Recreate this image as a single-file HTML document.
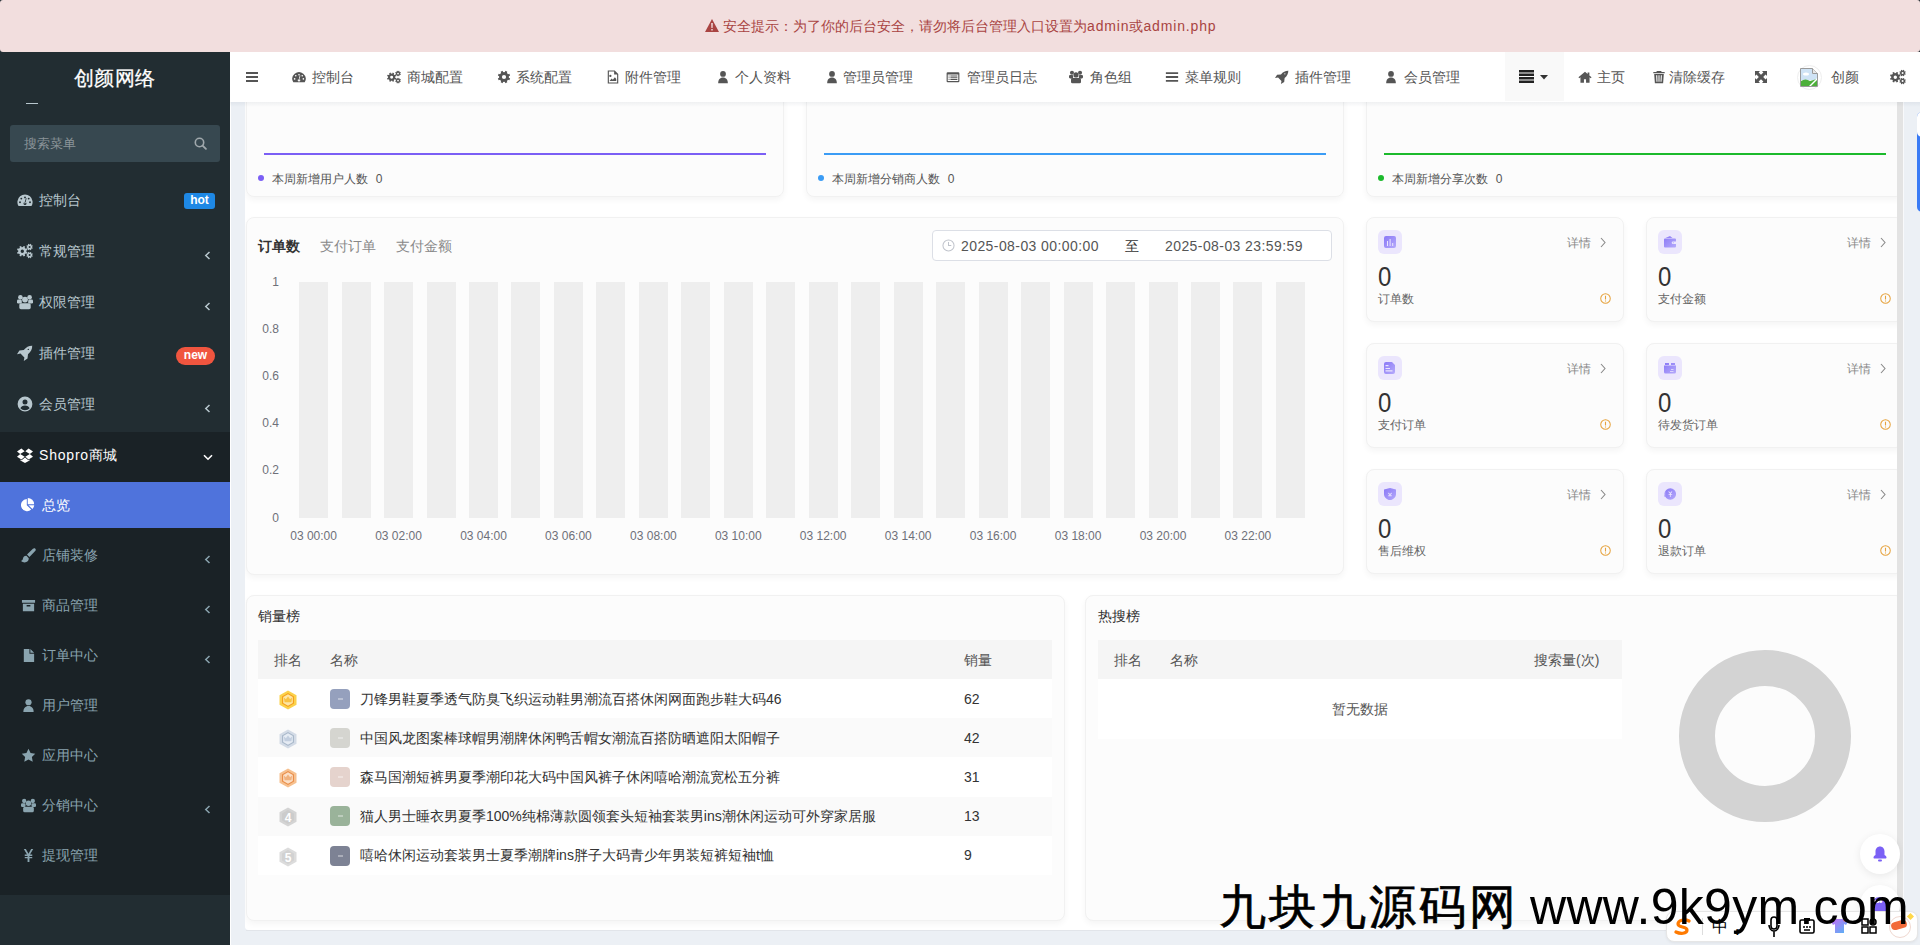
<!DOCTYPE html>
<html><head><meta charset="utf-8">
<style>
*{box-sizing:border-box;margin:0;padding:0}
html,body{width:1920px;height:945px;overflow:hidden;font-family:"Liberation Sans",sans-serif;font-size:14px;color:#333;background:#222d32;position:relative}
.abs{position:absolute}
.t{white-space:nowrap;line-height:1}
#alert{left:0;top:0;width:1920px;height:52px;background:#f2dede;border-radius:3px}
#side{left:0;top:52px;width:230px;height:893px;background:#222d32;overflow:hidden}
#hdr{left:230px;top:52px;width:1690px;height:50px;background:#fff}
#panel{left:245px;top:102px;width:1659px;height:828px;background:#fff;border-radius:0 0 3px 3px;overflow:hidden}
.card{position:absolute;background:#fcfcfc;border-radius:8px;border:1px solid #f1f1f1;box-shadow:0 3px 6px rgba(0,0,0,.045)}
</style></head><body>

<div class="abs" style="left:230px;top:102px;width:1690px;height:843px;background:#ecf0f5"></div>
<div style="position:absolute;left:0;top:0;width:1920px;height:945px;clip-path:inset(102px 16px 15px 245px round 0 0 3px 3px)">
<div id="panel" class="abs"></div>
<div class="card" style="left:246px;top:-20px;width:538px;height:217px;"></div>
<div class="abs" style="left:264px;top:153px;width:502px;height:2px;background:#7b5ff5"></div>
<div class="abs" style="left:258px;top:175px;width:6px;height:6px;border-radius:50%;background:#7b5ff5"></div>
<div class="abs t" style="left:272px;top:173px;font-size:12px;color:#555;">本周新增用户人数&nbsp;&nbsp;<span style="margin-left:1px">0</span></div>
<div class="card" style="left:806px;top:-20px;width:538px;height:217px;"></div>
<div class="abs" style="left:824px;top:153px;width:502px;height:2px;background:#3b9cf5"></div>
<div class="abs" style="left:818px;top:175px;width:6px;height:6px;border-radius:50%;background:#3b9cf5"></div>
<div class="abs t" style="left:832px;top:173px;font-size:12px;color:#555;">本周新增分销商人数&nbsp;&nbsp;<span style="margin-left:1px">0</span></div>
<div class="card" style="left:1366px;top:-20px;width:538px;height:217px;"></div>
<div class="abs" style="left:1384px;top:153px;width:502px;height:2px;background:#1cba2c"></div>
<div class="abs" style="left:1378px;top:175px;width:6px;height:6px;border-radius:50%;background:#1cba2c"></div>
<div class="abs t" style="left:1392px;top:173px;font-size:12px;color:#555;">本周新增分享次数&nbsp;&nbsp;<span style="margin-left:1px">0</span></div>
<div class="card" style="left:246px;top:217px;width:1098px;height:358px;"></div>
<div class="abs t" style="left:258px;top:239px;font-size:14px;color:#333;font-weight:bold">订单数</div>
<div class="abs t" style="left:320px;top:239px;font-size:14px;color:#888;">支付订单</div>
<div class="abs t" style="left:396px;top:239px;font-size:14px;color:#888;">支付金额</div>
<div class="abs" style="left:932px;top:230px;width:400px;height:31px;border:1px solid #dcdfe6;border-radius:4px;background:#fff"></div>
<svg class="abs" style="left:942px;top:239px;width:13px;height:13px" viewBox="0 0 14 14"><circle cx="7" cy="7" r="6" stroke="#c0c4cc" stroke-width="1.1" fill="none"/><path d="M7 3.2V7h3" stroke="#c0c4cc" stroke-width="1.1" fill="none"/></svg>
<div class="abs t" style="left:961px;top:239px;font-size:14px;color:#555;letter-spacing:.42px;transform:scaleY(1.08);transform-origin:0 80%">2025-08-03 00:00:00</div>
<div class="abs t" style="left:1125px;top:239px;font-size:14px;color:#333;">至</div>
<div class="abs t" style="left:1165px;top:239px;font-size:14px;color:#555;letter-spacing:.42px;transform:scaleY(1.08);transform-origin:0 80%">2025-08-03 23:59:59</div>
<div class="abs t" style="left:230px;width:49px;text-align:right;top:276.0px;font-size:12px;color:#6e7079">1</div>
<div class="abs t" style="left:230px;width:49px;text-align:right;top:323.1px;font-size:12px;color:#6e7079">0.8</div>
<div class="abs t" style="left:230px;width:49px;text-align:right;top:370.2px;font-size:12px;color:#6e7079">0.6</div>
<div class="abs t" style="left:230px;width:49px;text-align:right;top:417.3px;font-size:12px;color:#6e7079">0.4</div>
<div class="abs t" style="left:230px;width:49px;text-align:right;top:464.4px;font-size:12px;color:#6e7079">0.2</div>
<div class="abs t" style="left:230px;width:49px;text-align:right;top:511.5px;font-size:12px;color:#6e7079">0</div>
<div class="abs" style="left:299.10px;top:282px;width:29px;height:235.5px;background:#eeeeee"></div>
<div class="abs" style="left:341.57px;top:282px;width:29px;height:235.5px;background:#eeeeee"></div>
<div class="abs" style="left:384.04px;top:282px;width:29px;height:235.5px;background:#eeeeee"></div>
<div class="abs" style="left:426.51px;top:282px;width:29px;height:235.5px;background:#eeeeee"></div>
<div class="abs" style="left:468.98px;top:282px;width:29px;height:235.5px;background:#eeeeee"></div>
<div class="abs" style="left:511.45px;top:282px;width:29px;height:235.5px;background:#eeeeee"></div>
<div class="abs" style="left:553.92px;top:282px;width:29px;height:235.5px;background:#eeeeee"></div>
<div class="abs" style="left:596.39px;top:282px;width:29px;height:235.5px;background:#eeeeee"></div>
<div class="abs" style="left:638.86px;top:282px;width:29px;height:235.5px;background:#eeeeee"></div>
<div class="abs" style="left:681.33px;top:282px;width:29px;height:235.5px;background:#eeeeee"></div>
<div class="abs" style="left:723.80px;top:282px;width:29px;height:235.5px;background:#eeeeee"></div>
<div class="abs" style="left:766.27px;top:282px;width:29px;height:235.5px;background:#eeeeee"></div>
<div class="abs" style="left:808.74px;top:282px;width:29px;height:235.5px;background:#eeeeee"></div>
<div class="abs" style="left:851.21px;top:282px;width:29px;height:235.5px;background:#eeeeee"></div>
<div class="abs" style="left:893.68px;top:282px;width:29px;height:235.5px;background:#eeeeee"></div>
<div class="abs" style="left:936.15px;top:282px;width:29px;height:235.5px;background:#eeeeee"></div>
<div class="abs" style="left:978.62px;top:282px;width:29px;height:235.5px;background:#eeeeee"></div>
<div class="abs" style="left:1021.09px;top:282px;width:29px;height:235.5px;background:#eeeeee"></div>
<div class="abs" style="left:1063.56px;top:282px;width:29px;height:235.5px;background:#eeeeee"></div>
<div class="abs" style="left:1106.03px;top:282px;width:29px;height:235.5px;background:#eeeeee"></div>
<div class="abs" style="left:1148.50px;top:282px;width:29px;height:235.5px;background:#eeeeee"></div>
<div class="abs" style="left:1190.97px;top:282px;width:29px;height:235.5px;background:#eeeeee"></div>
<div class="abs" style="left:1233.44px;top:282px;width:29px;height:235.5px;background:#eeeeee"></div>
<div class="abs" style="left:1275.91px;top:282px;width:29px;height:235.5px;background:#eeeeee"></div>
<div class="abs t" style="left:263.6px;width:100px;text-align:center;top:529.5px;font-size:12px;color:#6e7079">03 00:00</div>
<div class="abs t" style="left:348.5px;width:100px;text-align:center;top:529.5px;font-size:12px;color:#6e7079">03 02:00</div>
<div class="abs t" style="left:433.5px;width:100px;text-align:center;top:529.5px;font-size:12px;color:#6e7079">03 04:00</div>
<div class="abs t" style="left:518.4px;width:100px;text-align:center;top:529.5px;font-size:12px;color:#6e7079">03 06:00</div>
<div class="abs t" style="left:603.4px;width:100px;text-align:center;top:529.5px;font-size:12px;color:#6e7079">03 08:00</div>
<div class="abs t" style="left:688.3px;width:100px;text-align:center;top:529.5px;font-size:12px;color:#6e7079">03 10:00</div>
<div class="abs t" style="left:773.2px;width:100px;text-align:center;top:529.5px;font-size:12px;color:#6e7079">03 12:00</div>
<div class="abs t" style="left:858.2px;width:100px;text-align:center;top:529.5px;font-size:12px;color:#6e7079">03 14:00</div>
<div class="abs t" style="left:943.1px;width:100px;text-align:center;top:529.5px;font-size:12px;color:#6e7079">03 16:00</div>
<div class="abs t" style="left:1028.1px;width:100px;text-align:center;top:529.5px;font-size:12px;color:#6e7079">03 18:00</div>
<div class="abs t" style="left:1113.0px;width:100px;text-align:center;top:529.5px;font-size:12px;color:#6e7079">03 20:00</div>
<div class="abs t" style="left:1197.9px;width:100px;text-align:center;top:529.5px;font-size:12px;color:#6e7079">03 22:00</div>
<div class="card" style="left:1366px;top:217px;width:258px;height:105px;"></div>
<div class="abs" style="left:1378px;top:230px;width:24px;height:24px;border-radius:6px;background:#ebe6fd"></div>
<svg class="abs" style="left:1384px;top:236px;width:12px;height:12px" viewBox="0 0 12 12"><defs><linearGradient id="g1" x1="0" y1="0" x2="1" y2="1"><stop offset="0" stop-color="#8a78f6"/><stop offset="1" stop-color="#b5aafb"/></linearGradient></defs><path fill="url(#g1)" fill-rule="evenodd" d="M2 0h8a2 2 0 0 1 2 2v8a2 2 0 0 1-2 2H2a2 2 0 0 1-2-2V2a2 2 0 0 1 2-2zM3 5v5h1V5zM5.6 3v7h1V3zM8.2 7v3h1V7z"/></svg>
<div class="abs t" style="left:1567px;top:237px;font-size:12px;color:#888;">详情</div>
<svg class="abs" style="left:1600px;top:237px;width:6px;height:11px" viewBox="0 0 6 11"><path d="M1 1l4 4.5L1 10" stroke="#888" stroke-width="1.1" fill="none"/></svg>
<div class="abs t" style="left:1378px;top:262.8px;font-size:24px;color:#333;transform:scaleY(1.13);transform-origin:0 0">0</div>
<div class="abs t" style="left:1378px;top:293px;font-size:12px;color:#666;">订单数</div>
<svg class="abs" style="left:1600px;top:293px;width:11px;height:11px" viewBox="0 0 12 12"><circle cx="6" cy="6" r="5.2" stroke="#e6a23c" stroke-width="1.1" fill="none"/><path d="M6 3v4M6 8.2v1" stroke="#e6a23c" stroke-width="1.2"/></svg>
<div class="card" style="left:1646px;top:217px;width:258px;height:105px;"></div>
<div class="abs" style="left:1658px;top:230px;width:24px;height:24px;border-radius:6px;background:#ebe6fd"></div>
<svg class="abs" style="left:1664px;top:236px;width:12px;height:12px" viewBox="0 0 12 12"><defs><linearGradient id="g2" x1="0" y1="0" x2="1" y2="1"><stop offset="0" stop-color="#8a78f6"/><stop offset="1" stop-color="#b5aafb"/></linearGradient></defs><path fill="url(#g2)" fill-rule="evenodd" d="M6 0 8.5 2H1.5zM1 2.5h10a1 1 0 0 1 1 1v2H9a1.3 1.3 0 0 0 0 2.6h3v2.4a1 1 0 0 1-1 1H1a1 1 0 0 1-1-1v-7a1 1 0 0 1 1-1zM9.3 6.2a.5.5 0 1 0 0 1 .5.5 0 0 0 0-1z"/></svg>
<div class="abs t" style="left:1847px;top:237px;font-size:12px;color:#888;">详情</div>
<svg class="abs" style="left:1880px;top:237px;width:6px;height:11px" viewBox="0 0 6 11"><path d="M1 1l4 4.5L1 10" stroke="#888" stroke-width="1.1" fill="none"/></svg>
<div class="abs t" style="left:1658px;top:262.8px;font-size:24px;color:#333;transform:scaleY(1.13);transform-origin:0 0">0</div>
<div class="abs t" style="left:1658px;top:293px;font-size:12px;color:#666;">支付金额</div>
<svg class="abs" style="left:1880px;top:293px;width:11px;height:11px" viewBox="0 0 12 12"><circle cx="6" cy="6" r="5.2" stroke="#e6a23c" stroke-width="1.1" fill="none"/><path d="M6 3v4M6 8.2v1" stroke="#e6a23c" stroke-width="1.2"/></svg>
<div class="card" style="left:1366px;top:343px;width:258px;height:105px;"></div>
<div class="abs" style="left:1378px;top:356px;width:24px;height:24px;border-radius:6px;background:#ebe6fd"></div>
<svg class="abs" style="left:1384px;top:362px;width:12px;height:12px" viewBox="0 0 12 12"><defs><linearGradient id="g3" x1="0" y1="0" x2="1" y2="1"><stop offset="0" stop-color="#8a78f6"/><stop offset="1" stop-color="#b5aafb"/></linearGradient></defs><path fill="url(#g3)" fill-rule="evenodd" d="M2 0h6l3 3v7a2 2 0 0 1-2 2H2a2 2 0 0 1-2-2V2a2 2 0 0 1 2-2zM1.5 3h3v1.2h-3zM1.5 6h4.5v1h-4.5zM1.5 8.3h7v1.2h-7z"/></svg>
<div class="abs t" style="left:1567px;top:363px;font-size:12px;color:#888;">详情</div>
<svg class="abs" style="left:1600px;top:363px;width:6px;height:11px" viewBox="0 0 6 11"><path d="M1 1l4 4.5L1 10" stroke="#888" stroke-width="1.1" fill="none"/></svg>
<div class="abs t" style="left:1378px;top:388.8px;font-size:24px;color:#333;transform:scaleY(1.13);transform-origin:0 0">0</div>
<div class="abs t" style="left:1378px;top:419px;font-size:12px;color:#666;">支付订单</div>
<svg class="abs" style="left:1600px;top:419px;width:11px;height:11px" viewBox="0 0 12 12"><circle cx="6" cy="6" r="5.2" stroke="#e6a23c" stroke-width="1.1" fill="none"/><path d="M6 3v4M6 8.2v1" stroke="#e6a23c" stroke-width="1.2"/></svg>
<div class="card" style="left:1646px;top:343px;width:258px;height:105px;"></div>
<div class="abs" style="left:1658px;top:356px;width:24px;height:24px;border-radius:6px;background:#ebe6fd"></div>
<svg class="abs" style="left:1664px;top:362px;width:12px;height:12px" viewBox="0 0 12 12"><defs><linearGradient id="g4" x1="0" y1="0" x2="1" y2="1"><stop offset="0" stop-color="#8a78f6"/><stop offset="1" stop-color="#b5aafb"/></linearGradient></defs><path fill="url(#g4)" fill-rule="evenodd" d="M1 1h4v2H1zM7 1h4v2H7zM0 3.5h12V10a1.5 1.5 0 0 1-1.5 1.5h-9A1.5 1.5 0 0 1 0 10zM7 7h2.5v.8H7zM6 9h3.5v.8H6z"/></svg>
<div class="abs t" style="left:1847px;top:363px;font-size:12px;color:#888;">详情</div>
<svg class="abs" style="left:1880px;top:363px;width:6px;height:11px" viewBox="0 0 6 11"><path d="M1 1l4 4.5L1 10" stroke="#888" stroke-width="1.1" fill="none"/></svg>
<div class="abs t" style="left:1658px;top:388.8px;font-size:24px;color:#333;transform:scaleY(1.13);transform-origin:0 0">0</div>
<div class="abs t" style="left:1658px;top:419px;font-size:12px;color:#666;">待发货订单</div>
<svg class="abs" style="left:1880px;top:419px;width:11px;height:11px" viewBox="0 0 12 12"><circle cx="6" cy="6" r="5.2" stroke="#e6a23c" stroke-width="1.1" fill="none"/><path d="M6 3v4M6 8.2v1" stroke="#e6a23c" stroke-width="1.2"/></svg>
<div class="card" style="left:1366px;top:469px;width:258px;height:105px;"></div>
<div class="abs" style="left:1378px;top:482px;width:24px;height:24px;border-radius:6px;background:#ebe6fd"></div>
<svg class="abs" style="left:1384px;top:488px;width:12px;height:12px" viewBox="0 0 12 12"><defs><linearGradient id="g5" x1="0" y1="0" x2="1" y2="1"><stop offset="0" stop-color="#8a78f6"/><stop offset="1" stop-color="#b5aafb"/></linearGradient></defs><path fill="url(#g5)" fill-rule="evenodd" d="M6 0l6 1.5v5C12 9.5 9 11.5 6 12.5 3 11.5 0 9.5 0 6.5v-5zM4.3 4.5l1.7 1.4 1.7-1.4v1.3L6 7.2 4.3 5.8zM4.3 7.3h3.4v.9H4.3z"/></svg>
<div class="abs t" style="left:1567px;top:489px;font-size:12px;color:#888;">详情</div>
<svg class="abs" style="left:1600px;top:489px;width:6px;height:11px" viewBox="0 0 6 11"><path d="M1 1l4 4.5L1 10" stroke="#888" stroke-width="1.1" fill="none"/></svg>
<div class="abs t" style="left:1378px;top:514.8px;font-size:24px;color:#333;transform:scaleY(1.13);transform-origin:0 0">0</div>
<div class="abs t" style="left:1378px;top:545px;font-size:12px;color:#666;">售后维权</div>
<svg class="abs" style="left:1600px;top:545px;width:11px;height:11px" viewBox="0 0 12 12"><circle cx="6" cy="6" r="5.2" stroke="#e6a23c" stroke-width="1.1" fill="none"/><path d="M6 3v4M6 8.2v1" stroke="#e6a23c" stroke-width="1.2"/></svg>
<div class="card" style="left:1646px;top:469px;width:258px;height:105px;"></div>
<div class="abs" style="left:1658px;top:482px;width:24px;height:24px;border-radius:6px;background:#ebe6fd"></div>
<svg class="abs" style="left:1664px;top:488px;width:12px;height:12px" viewBox="0 0 12 12"><defs><linearGradient id="g6" x1="0" y1="0" x2="1" y2="1"><stop offset="0" stop-color="#8a78f6"/><stop offset="1" stop-color="#b5aafb"/></linearGradient></defs><path fill="url(#g6)" fill-rule="evenodd" d="M6.3.2a5.8 5.8 0 1 1 0 11.6 5.8 5.8 0 0 1 0-11.6zM4.9 3.2l1.4 1.5 1.4-1.5.6.5-1.4 1.7v.9h1.3v.8H6.7V9h-.8V7.1H4.6v-.8h1.3v-.9L4.3 3.7z"/><path fill="#a898f8" d="M0 7.8.6 7.2 1 7.6V3h.8v5.1l-.9.9z"/></svg>
<div class="abs t" style="left:1847px;top:489px;font-size:12px;color:#888;">详情</div>
<svg class="abs" style="left:1880px;top:489px;width:6px;height:11px" viewBox="0 0 6 11"><path d="M1 1l4 4.5L1 10" stroke="#888" stroke-width="1.1" fill="none"/></svg>
<div class="abs t" style="left:1658px;top:514.8px;font-size:24px;color:#333;transform:scaleY(1.13);transform-origin:0 0">0</div>
<div class="abs t" style="left:1658px;top:545px;font-size:12px;color:#666;">退款订单</div>
<svg class="abs" style="left:1880px;top:545px;width:11px;height:11px" viewBox="0 0 12 12"><circle cx="6" cy="6" r="5.2" stroke="#e6a23c" stroke-width="1.1" fill="none"/><path d="M6 3v4M6 8.2v1" stroke="#e6a23c" stroke-width="1.2"/></svg>
<div class="card" style="left:246px;top:595px;width:819px;height:326px;"></div>
<div class="abs t" style="left:258px;top:609px;font-size:14px;color:#333;">销量榜</div>
<div class="abs" style="left:258px;top:640px;width:794px;height:39px;background:#f5f5f5"></div>
<div class="abs t" style="left:274px;top:653px;font-size:14px;color:#555;">排名</div>
<div class="abs t" style="left:330px;top:653px;font-size:14px;color:#555;">名称</div>
<div class="abs t" style="left:964px;top:653px;font-size:14px;color:#555;">销量</div>
<div class="abs" style="left:258px;top:679.0px;width:794px;height:39.2px;background:#ffffff"></div>
<svg class="abs" style="left:279px;top:689.8px;width:18px;height:20px" viewBox="0 0 18 20"><path d="M9 .5 17.5 5.2v9.6L9 19.5 .5 14.8V5.2z" fill="#fbd14b"/><path d="M9 3 15 6.5v7L9 17 3 13.5v-7z" fill="#f5a01a"/><path d="M9 4.3 13.8 7.1v5.8L9 15.7 4.2 12.9V7.1z" fill="#fde6a6"/><path d="M5.6 12.2h6.8l.8-4.6-2.1 1.6L9 6.5 6.9 9.2 4.8 7.6z" fill="#f6b92a" opacity=".8"/></svg>
<div class="abs" style="left:330px;top:688.8px;width:20px;height:20px;border-radius:4px;background:#95a0bd"></div>
<div class="abs" style="left:338px;top:697.8px;width:5px;height:2px;background:rgba(255,255,255,.35)"></div>
<div class="abs t" style="left:360px;top:691.6px;font-size:14px;color:#333;">刀锋男鞋夏季透气防臭飞织运动鞋男潮流百搭休闲网面跑步鞋大码46</div>
<div class="abs t" style="left:964px;top:691.6px;font-size:14px;color:#333;">62</div>
<div class="abs" style="left:258px;top:718.2px;width:794px;height:39.2px;background:#fafafa"></div>
<svg class="abs" style="left:279px;top:729.0px;width:18px;height:20px" viewBox="0 0 18 20"><path d="M9 .5 17.5 5.2v9.6L9 19.5 .5 14.8V5.2z" fill="#d3dbe6"/><path d="M9 3 15 6.5v7L9 17 3 13.5v-7z" fill="#a9b8ca"/><path d="M9 4.3 13.8 7.1v5.8L9 15.7 4.2 12.9V7.1z" fill="#e6ecf4"/><path d="M5.6 12.2h6.8l.8-4.6-2.1 1.6L9 6.5 6.9 9.2 4.8 7.6z" fill="#b9c7d9" opacity=".8"/></svg>
<div class="abs" style="left:330px;top:728.0px;width:20px;height:20px;border-radius:4px;background:#d5d5d0"></div>
<div class="abs" style="left:338px;top:737.0px;width:5px;height:2px;background:rgba(255,255,255,.35)"></div>
<div class="abs t" style="left:360px;top:730.8000000000001px;font-size:14px;color:#333;">中国风龙图案棒球帽男潮牌休闲鸭舌帽女潮流百搭防晒遮阳太阳帽子</div>
<div class="abs t" style="left:964px;top:730.8000000000001px;font-size:14px;color:#333;">42</div>
<div class="abs" style="left:258px;top:757.4px;width:794px;height:39.2px;background:#ffffff"></div>
<svg class="abs" style="left:279px;top:768.2px;width:18px;height:20px" viewBox="0 0 18 20"><path d="M9 .5 17.5 5.2v9.6L9 19.5 .5 14.8V5.2z" fill="#f6c08f"/><path d="M9 3 15 6.5v7L9 17 3 13.5v-7z" fill="#e98d48"/><path d="M9 4.3 13.8 7.1v5.8L9 15.7 4.2 12.9V7.1z" fill="#fbe0c8"/><path d="M5.6 12.2h6.8l.8-4.6-2.1 1.6L9 6.5 6.9 9.2 4.8 7.6z" fill="#eda56a" opacity=".8"/></svg>
<div class="abs" style="left:330px;top:767.2px;width:20px;height:20px;border-radius:4px;background:#e5d3cd"></div>
<div class="abs" style="left:338px;top:776.2px;width:5px;height:2px;background:rgba(255,255,255,.35)"></div>
<div class="abs t" style="left:360px;top:770.0px;font-size:14px;color:#333;">森马国潮短裤男夏季潮印花大码中国风裤子休闲嘻哈潮流宽松五分裤</div>
<div class="abs t" style="left:964px;top:770.0px;font-size:14px;color:#333;">31</div>
<div class="abs" style="left:258px;top:796.6px;width:794px;height:39.2px;background:#fafafa"></div>
<svg class="abs" style="left:279px;top:807.4px;width:18px;height:20px" viewBox="0 0 18 20"><path d="M9 .5 17.5 5.2v9.6L9 19.5 .5 14.8V5.2z" fill="#d4d4d4"/><path d="M9 3 15 6.5v7L9 17 3 13.5v-7z" fill="#cccccc"/><text x="9" y="14.6" font-size="12" font-weight="bold" text-anchor="middle" fill="#fff" font-family="Liberation Sans">4</text></svg>
<div class="abs" style="left:330px;top:806.4px;width:20px;height:20px;border-radius:4px;background:#9ab39a"></div>
<div class="abs" style="left:338px;top:815.4px;width:5px;height:2px;background:rgba(255,255,255,.35)"></div>
<div class="abs t" style="left:360px;top:809.2px;font-size:14px;color:#333;">猫人男士睡衣男夏季100%纯棉薄款圆领套头短袖套装男ins潮休闲运动可外穿家居服</div>
<div class="abs t" style="left:964px;top:809.2px;font-size:14px;color:#333;">13</div>
<div class="abs" style="left:258px;top:835.8px;width:794px;height:39.2px;background:#ffffff"></div>
<svg class="abs" style="left:279px;top:846.6px;width:18px;height:20px" viewBox="0 0 18 20"><path d="M9 .5 17.5 5.2v9.6L9 19.5 .5 14.8V5.2z" fill="#dcdcdc"/><path d="M9 3 15 6.5v7L9 17 3 13.5v-7z" fill="#d2d2d2"/><text x="9" y="14.6" font-size="12" font-weight="bold" text-anchor="middle" fill="#fff" font-family="Liberation Sans">5</text></svg>
<div class="abs" style="left:330px;top:845.6px;width:20px;height:20px;border-radius:4px;background:#7d8294"></div>
<div class="abs" style="left:338px;top:854.6px;width:5px;height:2px;background:rgba(255,255,255,.35)"></div>
<div class="abs t" style="left:360px;top:848.4px;font-size:14px;color:#333;">嘻哈休闲运动套装男士夏季潮牌ins胖子大码青少年男装短裤短袖t恤</div>
<div class="abs t" style="left:964px;top:848.4px;font-size:14px;color:#333;">9</div>
<div class="card" style="left:1085px;top:595px;width:819px;height:326px;"></div>
<div class="abs t" style="left:1098px;top:609px;font-size:14px;color:#333;">热搜榜</div>
<div class="abs" style="left:1098px;top:640px;width:524px;height:39px;background:#f5f5f5"></div>
<div class="abs t" style="left:1114px;top:653px;font-size:14px;color:#555;">排名</div>
<div class="abs t" style="left:1170px;top:653px;font-size:14px;color:#555;">名称</div>
<div class="abs t" style="left:1534px;top:653px;font-size:14px;color:#555;">搜索量(次)</div>
<div class="abs" style="left:1098px;top:679px;width:524px;height:60px;background:#fff"></div>
<div class="abs t" style="left:1332px;top:702px;font-size:14px;color:#555;">暂无数据</div>
<div class="abs" style="left:1679px;top:650px;width:172px;height:172px;border-radius:50%;border:36px solid #d3d3d3"></div>
<div class="abs" style="left:1897px;top:102px;width:6px;height:828px;background:#e3e3e3"></div>
<div class="abs" style="left:1860px;top:834px;width:40px;height:40px;border-radius:50%;background:#fff;box-shadow:0 2px 8px rgba(0,0,0,.08)"></div>
<svg class="abs" style="left:1872px;top:845px;width:16px;height:18px" viewBox="0 0 16 18"><path d="M8 1.5c2.8 0 4.5 2.2 4.5 5V10c1 .6 2 1.5 2 2.5 0 .6-.4 1-1 1h-11c-.6 0-1-.4-1-1 0-1 1-1.9 2-2.5V6.5c0-2.8 1.7-5 4.5-5z" fill="#7b61f5"/><rect x="6" y="14.5" width="4" height="2" rx="1" fill="#7b61f5"/></svg>
<div class="abs" style="left:1860px;top:885px;width:40px;height:40px;border-radius:50%;background:#fff;box-shadow:0 2px 8px rgba(0,0,0,.08)"></div>
<div class="abs" style="left:1871px;top:897px;width:18px;height:16px;border-radius:50%;background:#7b61f5"></div>
<div class="abs t" style="left:1873px;top:897px;font-size:10px;color:#fff;font-weight:bold;letter-spacing:-.5px">•••</div>
</div>
<div class="abs" style="left:1917px;top:112px;width:10px;height:100px;border-radius:6px;background:#3a7bf5"></div>
<div class="abs" style="left:1917px;top:112px;width:10px;height:25px;border-radius:6px;background:#fff"></div>
<div class="abs" style="left:1903px;top:102px;width:1px;height:828px;background:#f8f9fb"></div>
<div class="abs" style="left:246px;top:930px;width:1657px;height:1px;background:#e2e5ea"></div>
<div id="alert" class="abs">
<svg class="abs" style="left:705px;top:19px;width:14px;height:13px" viewBox="0 0 14 13"><path d="M7 0 14 13H0z" fill="#a94442"/><path d="M6.2 4h1.6l-.2 5H6.4zM6.3 10h1.4v1.5H6.3z" fill="#f2dede"/></svg>
<div class="abs t" style="left:723px;top:19px;font-size:14px;color:#a94442;">安全提示：为了你的后台安全，请勿将后台管理入口设置为<span style="letter-spacing:.85px">admin</span>或<span style="letter-spacing:.85px">admin.php</span></div>
</div>
<div id="side" class="abs">
<div class="abs t" style="left:74px;top:15.5px;font-size:20px;color:#fff;-webkit-text-stroke:.25px #fff;letter-spacing:.4px">创颜网络</div>
<div class="abs" style="left:26px;top:51px;width:12px;height:1px;background:#b8c7ce"></div>
<div class="abs" style="left:10px;top:73px;width:210px;height:37px;background:#374850;border-radius:3px"></div>
<div class="abs t" style="left:24px;top:85px;font-size:13px;color:#8b9499;">搜索菜单</div>
<svg class="abs" style="left:194px;top:85px;width:13px;height:13px" viewBox="0 0 13 13"><circle cx="5.5" cy="5.5" r="4.2" stroke="#a0a8ac" stroke-width="1.6" fill="none"/><path d="M8.6 8.6l3.3 3.3" stroke="#a0a8ac" stroke-width="1.8" stroke-linecap="round"/></svg>
<svg class="abs" style="left:17px;top:140px;width:16px;height:16px;" viewBox="0 0 16 16" fill="#b8c7ce"><path fill-rule="evenodd" d="M1.5 14.1A7.6 7.6 0 1 1 14.5 14.1zM7.05 5.40a0.95 0.95 0 1 0 1.90 0a0.95 0.95 0 1 0 -1.90 0zM3.35 6.60a0.95 0.95 0 1 0 1.90 0a0.95 0.95 0 1 0 -1.90 0zM10.75 6.60a0.95 0.95 0 1 0 1.90 0a0.95 0.95 0 1 0 -1.90 0zM2.05 10.20a0.95 0.95 0 1 0 1.90 0a0.95 0.95 0 1 0 -1.90 0zM12.05 10.20a0.95 0.95 0 1 0 1.90 0a0.95 0.95 0 1 0 -1.90 0zM6.50 11.60a1.50 1.50 0 1 0 3.00 0a1.50 1.50 0 1 0 -3.00 0zM8.3 11.6 9.6 6.3 8.9 6.2 7.3 11.4z"/></svg>
<div class="abs t" style="left:39px;top:141px;font-size:14px;color:#b8c7ce;">控制台</div>
<div class="abs" style="left:184px;top:141px;width:31px;height:16px;background:#1e88e5;border-radius:3px;color:#fff;font-size:12px;font-weight:bold;text-align:center;line-height:15px">hot</div>
<svg class="abs" style="left:17px;top:191px;width:16px;height:16px;" viewBox="0 0 16 16" fill="#b8c7ce"><path fill-rule="evenodd" d="M9.40 8.20 L9.34 8.87 L10.56 9.42 L9.88 11.06 L8.64 10.58 L8.20 11.10 L7.68 11.54 L8.16 12.78 L6.52 13.46 L5.97 12.24 L5.30 12.30 L4.63 12.24 L4.08 13.46 L2.44 12.78 L2.92 11.54 L2.40 11.10 L1.96 10.58 L0.72 11.06 L0.04 9.42 L1.26 8.87 L1.20 8.20 L1.26 7.53 L0.04 6.98 L0.72 5.34 L1.96 5.82 L2.40 5.30 L2.92 4.86 L2.44 3.62 L4.08 2.94 L4.63 4.16 L5.30 4.10 L5.97 4.16 L6.52 2.94 L8.16 3.62 L7.68 4.86 L8.20 5.30 L8.64 5.82 L9.88 5.34 L10.56 6.98 L9.34 7.53zM3.60 8.20a1.70 1.70 0 1 0 3.40 0a1.70 1.70 0 1 0 -3.40 0zM15.10 4.00 L15.07 4.41 L15.81 4.75 L15.40 5.75 L14.63 5.45 L14.37 5.77 L14.05 6.03 L14.35 6.80 L13.35 7.21 L13.01 6.47 L12.60 6.50 L12.19 6.47 L11.85 7.21 L10.85 6.80 L11.15 6.03 L10.83 5.77 L10.57 5.45 L9.80 5.75 L9.39 4.75 L10.13 4.41 L10.10 4.00 L10.13 3.59 L9.39 3.25 L9.80 2.25 L10.57 2.55 L10.83 2.23 L11.15 1.97 L10.85 1.20 L11.85 0.79 L12.19 1.53 L12.60 1.50 L13.01 1.53 L13.35 0.79 L14.35 1.20 L14.05 1.97 L14.37 2.23 L14.63 2.55 L15.40 2.25 L15.81 3.25 L15.07 3.59zM11.60 4.00a1.00 1.00 0 1 0 2.00 0a1.00 1.00 0 1 0 -2.00 0zM15.10 12.10 L15.07 12.51 L15.81 12.85 L15.40 13.85 L14.63 13.55 L14.37 13.87 L14.05 14.13 L14.35 14.90 L13.35 15.31 L13.01 14.57 L12.60 14.60 L12.19 14.57 L11.85 15.31 L10.85 14.90 L11.15 14.13 L10.83 13.87 L10.57 13.55 L9.80 13.85 L9.39 12.85 L10.13 12.51 L10.10 12.10 L10.13 11.69 L9.39 11.35 L9.80 10.35 L10.57 10.65 L10.83 10.33 L11.15 10.07 L10.85 9.30 L11.85 8.89 L12.19 9.63 L12.60 9.60 L13.01 9.63 L13.35 8.89 L14.35 9.30 L14.05 10.07 L14.37 10.33 L14.63 10.65 L15.40 10.35 L15.81 11.35 L15.07 11.69zM11.60 12.10a1.00 1.00 0 1 0 2.00 0a1.00 1.00 0 1 0 -2.00 0z"/></svg>
<div class="abs t" style="left:39px;top:192px;font-size:14px;color:#b8c7ce;">常规管理</div>
<svg class="abs" style="left:204px;top:199px;width:7px;height:9px" viewBox="0 0 7 9"><path d="M5.5 1 1.8 4.5 5.5 8" stroke="#b8c7ce" stroke-width="1.5" fill="none"/></svg>
<svg class="abs" style="left:17px;top:242px;width:16px;height:16px;" viewBox="0 0 16 16" fill="#b8c7ce"><circle cx="3.4" cy="3.2" r="2.3"/><circle cx="12.6" cy="3.2" r="2.3"/><circle cx="8" cy="5.6" r="2.9"/><rect x="0" y="5.6" width="4.8" height="4" rx="1.3"/><rect x="11.2" y="5.6" width="4.8" height="4" rx="1.3"/><rect x="2.3" y="9.2" width="11.4" height="6" rx="1.6"/></svg>
<div class="abs t" style="left:39px;top:243px;font-size:14px;color:#b8c7ce;">权限管理</div>
<svg class="abs" style="left:204px;top:250px;width:7px;height:9px" viewBox="0 0 7 9"><path d="M5.5 1 1.8 4.5 5.5 8" stroke="#b8c7ce" stroke-width="1.5" fill="none"/></svg>
<svg class="abs" style="left:17px;top:293px;width:16px;height:16px;" viewBox="0 0 16 16" fill="#b8c7ce"><path fill-rule="evenodd" d="M15.5.8c-3.3-.2-6.3 1.3-8.7 4.2L2.4 5.5 0 9.2l3.5-.6 3.9 3.9-.6 3.5 3.7-2.4.5-4.4c2.9-2.4 4.4-5.4 4.2-8.7zM10.60 4.40a0.70 0.70 0 1 0 1.40 0a0.70 0.70 0 1 0 -1.40 0z"/></svg>
<div class="abs t" style="left:39px;top:294px;font-size:14px;color:#b8c7ce;">插件管理</div>
<div class="abs" style="left:176px;top:295px;width:39px;height:18px;background:#f0553f;border-radius:9px;color:#fff;font-size:12px;font-weight:bold;text-align:center;line-height:17px">new</div>
<svg class="abs" style="left:17px;top:344px;width:16px;height:16px;" viewBox="0 0 16 16" fill="#b8c7ce"><path fill-rule="evenodd" d="M0.60 8.00a7.40 7.40 0 1 0 14.80 0a7.40 7.40 0 1 0 -14.80 0zM5.50 6.00a2.50 2.50 0 1 0 5.00 0a2.50 2.50 0 1 0 -5.00 0zM3.4 12.3C3.9 10.5 5.7 9.4 8 9.4s4.1 1.1 4.6 2.9C11.4 13.6 9.8 14.3 8 14.3s-3.4-.7-4.6-2z"/></svg>
<div class="abs t" style="left:39px;top:345px;font-size:14px;color:#b8c7ce;">会员管理</div>
<svg class="abs" style="left:204px;top:352px;width:7px;height:9px" viewBox="0 0 7 9"><path d="M5.5 1 1.8 4.5 5.5 8" stroke="#b8c7ce" stroke-width="1.5" fill="none"/></svg>
<div class="abs" style="left:0;top:380px;width:230px;height:463px;background:#1a2226"></div>
<svg class="abs" style="left:17px;top:395px;width:16px;height:16px;" viewBox="0 0 16 16" fill="#fff"><path d="M4.4 1.5 0 4.5l3.2 2.6L7.7 4.3zM11.6 1.5 8.3 4.3l4.5 2.8L16 4.5zM3.2 7.1 0 9.7l4.4 2.9 3.3-2.8zM12.8 7.1l-4.5 2.7 3.3 2.8L16 9.7zM8 10.4 4.6 13.2l-1.2-.8v1l4.6 2.6 4.6-2.6v-1l-1.2.8z"/></svg>
<div class="abs t" style="left:39px;top:396px;font-size:14px;color:#fff;"><span style="letter-spacing:.8px">Shopro</span>商城</div>
<svg class="abs" style="left:203px;top:402px;width:10px;height:7px" viewBox="0 0 10 7"><path d="M1 1.2 5 5.2 9 1.2" stroke="#fff" stroke-width="1.6" fill="none"/></svg>
<div class="abs" style="left:0;top:430px;width:230px;height:46px;background:#4f73dc"></div>
<svg class="abs" style="left:21px;top:445px;width:15px;height:15px;" viewBox="0 0 16 16" fill="#fff"><path d="M6.2 2.1A6.5 6.5 0 1 0 10.9 13.4L6.2 8.7z"/><path d="M7.2 1v6.8H14A6.8 6.8 0 0 0 7.2 1z"/><path d="M8 8.8h6.1a6.5 6.5 0 0 1-1.9 4.1z"/></svg>
<div class="abs t" style="left:42px;top:446px;font-size:14px;color:#fff;">总览</div>
<svg class="abs" style="left:20.5px;top:495.5px;width:15px;height:15px;" viewBox="0 0 16 16" fill="#8aa4af"><path d="M15.3.7c-.7-.7-1.8-.6-2.6.2L6.4 7l2.6 2.6 6.1-6.3c.8-.8.9-1.9.2-2.6zM5.8 8.2C3.9 8 2.3 9.4 2.1 11.3 2 12.6 1.3 13.4 0 13.9c1 1 2.5 1.5 3.9 1.5 2.6 0 4.5-1.9 4.4-4.4z"/></svg>
<div class="abs t" style="left:42px;top:496px;font-size:14px;color:#8aa4af;">店铺装修</div>
<svg class="abs" style="left:204px;top:503px;width:7px;height:9px" viewBox="0 0 7 9"><path d="M5.5 1 1.8 4.5 5.5 8" stroke="#8aa4af" stroke-width="1.5" fill="none"/></svg>
<svg class="abs" style="left:20.5px;top:545.5px;width:15px;height:15px;" viewBox="0 0 16 16" fill="#8aa4af"><path d="M1 2h14v3H1zM2 6h12v8H2zm4 1.5v1.5h4V7.5z" fill-rule="evenodd"/></svg>
<div class="abs t" style="left:42px;top:546px;font-size:14px;color:#8aa4af;">商品管理</div>
<svg class="abs" style="left:204px;top:553px;width:7px;height:9px" viewBox="0 0 7 9"><path d="M5.5 1 1.8 4.5 5.5 8" stroke="#8aa4af" stroke-width="1.5" fill="none"/></svg>
<svg class="abs" style="left:20.5px;top:595.5px;width:15px;height:15px;" viewBox="0 0 16 16" fill="#8aa4af"><path d="M3 1h6v5h5v9H3zM10 1l4 4h-4z"/></svg>
<div class="abs t" style="left:42px;top:596px;font-size:14px;color:#8aa4af;">订单中心</div>
<svg class="abs" style="left:204px;top:603px;width:7px;height:9px" viewBox="0 0 7 9"><path d="M5.5 1 1.8 4.5 5.5 8" stroke="#8aa4af" stroke-width="1.5" fill="none"/></svg>
<svg class="abs" style="left:20.5px;top:645.5px;width:15px;height:15px;" viewBox="0 0 16 16" fill="#8aa4af"><circle cx="8" cy="4.5" r="3.3"/><path d="M2.5 15c0-4 2-6.5 5.5-6.5s5.5 2.5 5.5 6.5z"/></svg>
<div class="abs t" style="left:42px;top:646px;font-size:14px;color:#8aa4af;">用户管理</div>
<svg class="abs" style="left:20.5px;top:695.5px;width:15px;height:15px;" viewBox="0 0 16 16" fill="#8aa4af"><path d="M8 .8l2.2 4.6 5 .7-3.6 3.5.9 5L8 12.2l-4.5 2.4.9-5L.8 6.1l5-.7z"/></svg>
<div class="abs t" style="left:42px;top:696px;font-size:14px;color:#8aa4af;">应用中心</div>
<svg class="abs" style="left:20.5px;top:745.5px;width:15px;height:15px;" viewBox="0 0 16 16" fill="#8aa4af"><circle cx="3.4" cy="3.2" r="2.3"/><circle cx="12.6" cy="3.2" r="2.3"/><circle cx="8" cy="5.6" r="2.9"/><rect x="0" y="5.6" width="4.8" height="4" rx="1.3"/><rect x="11.2" y="5.6" width="4.8" height="4" rx="1.3"/><rect x="2.3" y="9.2" width="11.4" height="6" rx="1.6"/></svg>
<div class="abs t" style="left:42px;top:746px;font-size:14px;color:#8aa4af;">分销中心</div>
<svg class="abs" style="left:204px;top:753px;width:7px;height:9px" viewBox="0 0 7 9"><path d="M5.5 1 1.8 4.5 5.5 8" stroke="#8aa4af" stroke-width="1.5" fill="none"/></svg>
<svg class="abs" style="left:20.5px;top:795.5px;width:15px;height:15px;" viewBox="0 0 16 16" fill="#8aa4af"><path d="M3 1h2.2L8 6.2 10.8 1H13L9.6 7H12v1.4H9v1.2h3V11H9v4H7v-4H4V9.6h3V8.4H4V7h2.4z"/></svg>
<div class="abs t" style="left:42px;top:796px;font-size:14px;color:#8aa4af;">提现管理</div>
</div>
<div class="abs" style="left:230px;top:102px;width:1px;height:843px;background:#fff"></div>
<div id="hdr" class="abs">
<svg class="abs" style="left:16px;top:20px;width:12px;height:10px" viewBox="0 0 12 10"><path d="M0 0h12v2H0zM0 4h12v2H0zM0 8h12v2H0z" fill="#555"/></svg>
<svg class="abs" style="left:62px;top:18px;width:14px;height:14px;" viewBox="0 0 16 16" fill="#555"><path fill-rule="evenodd" d="M1.5 14.1A7.6 7.6 0 1 1 14.5 14.1zM7.05 5.40a0.95 0.95 0 1 0 1.90 0a0.95 0.95 0 1 0 -1.90 0zM3.35 6.60a0.95 0.95 0 1 0 1.90 0a0.95 0.95 0 1 0 -1.90 0zM10.75 6.60a0.95 0.95 0 1 0 1.90 0a0.95 0.95 0 1 0 -1.90 0zM2.05 10.20a0.95 0.95 0 1 0 1.90 0a0.95 0.95 0 1 0 -1.90 0zM12.05 10.20a0.95 0.95 0 1 0 1.90 0a0.95 0.95 0 1 0 -1.90 0zM6.50 11.60a1.50 1.50 0 1 0 3.00 0a1.50 1.50 0 1 0 -3.00 0zM8.3 11.6 9.6 6.3 8.9 6.2 7.3 11.4z"/></svg>
<div class="abs t" style="left:82px;top:18px;font-size:14px;color:#555;">控制台</div>
<svg class="abs" style="left:157px;top:18px;width:14px;height:14px;" viewBox="0 0 16 16" fill="#555"><path fill-rule="evenodd" d="M9.40 8.20 L9.34 8.87 L10.56 9.42 L9.88 11.06 L8.64 10.58 L8.20 11.10 L7.68 11.54 L8.16 12.78 L6.52 13.46 L5.97 12.24 L5.30 12.30 L4.63 12.24 L4.08 13.46 L2.44 12.78 L2.92 11.54 L2.40 11.10 L1.96 10.58 L0.72 11.06 L0.04 9.42 L1.26 8.87 L1.20 8.20 L1.26 7.53 L0.04 6.98 L0.72 5.34 L1.96 5.82 L2.40 5.30 L2.92 4.86 L2.44 3.62 L4.08 2.94 L4.63 4.16 L5.30 4.10 L5.97 4.16 L6.52 2.94 L8.16 3.62 L7.68 4.86 L8.20 5.30 L8.64 5.82 L9.88 5.34 L10.56 6.98 L9.34 7.53zM3.60 8.20a1.70 1.70 0 1 0 3.40 0a1.70 1.70 0 1 0 -3.40 0zM15.10 4.00 L15.07 4.41 L15.81 4.75 L15.40 5.75 L14.63 5.45 L14.37 5.77 L14.05 6.03 L14.35 6.80 L13.35 7.21 L13.01 6.47 L12.60 6.50 L12.19 6.47 L11.85 7.21 L10.85 6.80 L11.15 6.03 L10.83 5.77 L10.57 5.45 L9.80 5.75 L9.39 4.75 L10.13 4.41 L10.10 4.00 L10.13 3.59 L9.39 3.25 L9.80 2.25 L10.57 2.55 L10.83 2.23 L11.15 1.97 L10.85 1.20 L11.85 0.79 L12.19 1.53 L12.60 1.50 L13.01 1.53 L13.35 0.79 L14.35 1.20 L14.05 1.97 L14.37 2.23 L14.63 2.55 L15.40 2.25 L15.81 3.25 L15.07 3.59zM11.60 4.00a1.00 1.00 0 1 0 2.00 0a1.00 1.00 0 1 0 -2.00 0zM15.10 12.10 L15.07 12.51 L15.81 12.85 L15.40 13.85 L14.63 13.55 L14.37 13.87 L14.05 14.13 L14.35 14.90 L13.35 15.31 L13.01 14.57 L12.60 14.60 L12.19 14.57 L11.85 15.31 L10.85 14.90 L11.15 14.13 L10.83 13.87 L10.57 13.55 L9.80 13.85 L9.39 12.85 L10.13 12.51 L10.10 12.10 L10.13 11.69 L9.39 11.35 L9.80 10.35 L10.57 10.65 L10.83 10.33 L11.15 10.07 L10.85 9.30 L11.85 8.89 L12.19 9.63 L12.60 9.60 L13.01 9.63 L13.35 8.89 L14.35 9.30 L14.05 10.07 L14.37 10.33 L14.63 10.65 L15.40 10.35 L15.81 11.35 L15.07 11.69zM11.60 12.10a1.00 1.00 0 1 0 2.00 0a1.00 1.00 0 1 0 -2.00 0z"/></svg>
<div class="abs t" style="left:177px;top:18px;font-size:14px;color:#555;">商城配置</div>
<svg class="abs" style="left:267px;top:18px;width:14px;height:14px;" viewBox="0 0 16 16" fill="#555"><path fill-rule="evenodd" d="M13.60 8.00 L13.52 8.92 L15.01 9.63 L14.11 11.81 L12.56 11.26 L11.96 11.96 L11.26 12.56 L11.81 14.11 L9.63 15.01 L8.92 13.52 L8.00 13.60 L7.08 13.52 L6.37 15.01 L4.19 14.11 L4.74 12.56 L4.04 11.96 L3.44 11.26 L1.89 11.81 L0.99 9.63 L2.48 8.92 L2.40 8.00 L2.48 7.08 L0.99 6.37 L1.89 4.19 L3.44 4.74 L4.04 4.04 L4.74 3.44 L4.19 1.89 L6.37 0.99 L7.08 2.48 L8.00 2.40 L8.92 2.48 L9.63 0.99 L11.81 1.89 L11.26 3.44 L11.96 4.04 L12.56 4.74 L14.11 4.19 L15.01 6.37 L13.52 7.08zM5.60 8.00a2.40 2.40 0 1 0 4.80 0a2.40 2.40 0 1 0 -4.80 0z"/></svg>
<div class="abs t" style="left:286px;top:18px;font-size:14px;color:#555;">系统配置</div>
<svg class="abs" style="left:376px;top:18px;width:14px;height:14px;" viewBox="0 0 16 16" fill="#555"><path d="M2 .5h8l4 4v11H2zm1.3 1.3v12.4h9.4V5.2H9.3V1.8zM5 5.5a1.3 1.3 0 1 1 0 2.6 1.3 1.3 0 0 1 0-2.6zM4 12.5l2.5-2.7 1.3 1.2 2.4-2.7 1.5 2v2.2z" fill-rule="evenodd"/></svg>
<div class="abs t" style="left:395px;top:18px;font-size:14px;color:#555;">附件管理</div>
<svg class="abs" style="left:486px;top:18px;width:14px;height:14px;" viewBox="0 0 16 16" fill="#555"><circle cx="8" cy="4.5" r="3.3"/><path d="M2.5 15c0-4 2-6.5 5.5-6.5s5.5 2.5 5.5 6.5z"/></svg>
<div class="abs t" style="left:505px;top:18px;font-size:14px;color:#555;">个人资料</div>
<svg class="abs" style="left:595px;top:18px;width:14px;height:14px;" viewBox="0 0 16 16" fill="#555"><circle cx="8" cy="4.5" r="3.3"/><path d="M2.5 15c0-4 2-6.5 5.5-6.5s5.5 2.5 5.5 6.5z"/></svg>
<div class="abs t" style="left:613px;top:18px;font-size:14px;color:#555;">管理员管理</div>
<svg class="abs" style="left:716px;top:18px;width:14px;height:14px;" viewBox="0 0 16 16" fill="#555"><path fill-rule="evenodd" d="M2 2.5h12a1.3 1.3 0 0 1 1.3 1.3v9a1.3 1.3 0 0 1-1.3 1.3H2A1.3 1.3 0 0 1 .7 12.8v-9A1.3 1.3 0 0 1 2 2.5zM2 5v7.6h12V5zM3 6.3h1v1H3zM5 6.3h8v1H5zM3 8.3h1v1H3zM5 8.3h8v1H5zM3 10.3h1v1H3zM5 10.3h8v1H5z"/></svg>
<div class="abs t" style="left:737px;top:18px;font-size:14px;color:#555;">管理员日志</div>
<svg class="abs" style="left:839px;top:18px;width:14px;height:14px;" viewBox="0 0 16 16" fill="#555"><circle cx="3.4" cy="3.2" r="2.3"/><circle cx="12.6" cy="3.2" r="2.3"/><circle cx="8" cy="5.6" r="2.9"/><rect x="0" y="5.6" width="4.8" height="4" rx="1.3"/><rect x="11.2" y="5.6" width="4.8" height="4" rx="1.3"/><rect x="2.3" y="9.2" width="11.4" height="6" rx="1.6"/></svg>
<div class="abs t" style="left:860px;top:18px;font-size:14px;color:#555;">角色组</div>
<svg class="abs" style="left:935px;top:18px;width:14px;height:14px;" viewBox="0 0 16 16" fill="#555"><path d="M1 2.5h14v2.2H1zM1 6.9h14v2.2H1zM1 11.3h14v2.2H1z"/></svg>
<div class="abs t" style="left:955px;top:18px;font-size:14px;color:#555;">菜单规则</div>
<svg class="abs" style="left:1045px;top:18px;width:14px;height:14px;" viewBox="0 0 16 16" fill="#555"><path fill-rule="evenodd" d="M15.5.8c-3.3-.2-6.3 1.3-8.7 4.2L2.4 5.5 0 9.2l3.5-.6 3.9 3.9-.6 3.5 3.7-2.4.5-4.4c2.9-2.4 4.4-5.4 4.2-8.7zM10.60 4.40a0.70 0.70 0 1 0 1.40 0a0.70 0.70 0 1 0 -1.40 0z"/></svg>
<div class="abs t" style="left:1065px;top:18px;font-size:14px;color:#555;">插件管理</div>
<svg class="abs" style="left:1154px;top:18px;width:14px;height:14px;" viewBox="0 0 16 16" fill="#555"><circle cx="8" cy="4.5" r="3.3"/><path d="M2.5 15c0-4 2-6.5 5.5-6.5s5.5 2.5 5.5 6.5z"/></svg>
<div class="abs t" style="left:1174px;top:18px;font-size:14px;color:#555;">会员管理</div>
<div class="abs" style="left:1275px;top:0;width:59px;height:49px;background:#f9f9f9"></div>
<svg class="abs" style="left:1289px;top:18px;width:15px;height:13px" viewBox="0 0 15 13"><path d="M0 0h15v2.5H0zM0 3.5h15V6H0zM0 7h15v2.5H0zM0 10.5h15V13H0z" fill="#222"/></svg>
<svg class="abs" style="left:1310px;top:23px;width:8px;height:5px" viewBox="0 0 8 5"><path d="M0 0h8L4 4.5z" fill="#333"/></svg>
<svg class="abs" style="left:1348px;top:18px;width:14px;height:14px;" viewBox="0 0 16 16" fill="#555"><path d="M8 2 .5 8.3l1 1.1L2.8 8.3V14.5h4v-4h2.4v4h4V8.3l1.3 1.1 1-1.1L13 6.3V2.8h-2v1.8z"/></svg>
<div class="abs t" style="left:1367px;top:18px;font-size:14px;color:#555;">主页</div>
<svg class="abs" style="left:1422px;top:18px;width:14px;height:14px;" viewBox="0 0 16 16" fill="#555"><path d="M5.5 1h5l.5 1.2h3.5v1.6h-13V2.2H5zM2.5 4.5h11l-.8 10.5H3.3zm2.2 1.5.4 7.5h1.2L6 6zm2.7 0v7.5h1.2V6zm2.7 0-.4 7.5h1.2l.4-7.5z" fill-rule="evenodd"/></svg>
<div class="abs t" style="left:1439px;top:18px;font-size:14px;color:#555;">清除缓存</div>
<svg class="abs" style="left:1525px;top:19px;width:12px;height:12px" viewBox="0 0 12 12"><path d="M0 0h5L3.6 1.4 6 3.8 8.4 1.4 7 0h5v5L10.6 3.6 8.2 6l2.4 2.4L12 7v5H7l1.4-1.4L6 8.2 3.6 10.6 5 12H0V7l1.4 1.4L3.8 6 1.4 3.6 0 5z" fill="#555"/></svg>
<div class="abs" style="left:1567px;top:13px;width:25px;height:25px;border-radius:50%;border:1px solid #eee"></div>
<svg class="abs" style="left:1570px;top:16px;width:18px;height:19px" viewBox="0 0 18 19"><path d="M.5.5h12l5 5v13H.5z" fill="#fff" stroke="#9a9a9a" stroke-width="1"/><path d="M12.5.5v5h5" fill="#e8e8e8" stroke="#9a9a9a" stroke-width="1"/><path d="M1 1h11v5h5v6H1z" fill="#cfe3f5"/><ellipse cx="6" cy="6" rx="3" ry="1.6" fill="#fff"/><path d="M1 18V13c3-2 6-2 9 0l7-2v7z" fill="#4caf3a"/><path d="M9 18 17 10v2l-6 6z" fill="#fff"/></svg>
<div class="abs t" style="left:1601px;top:18px;font-size:14px;color:#555;">创颜</div>
<svg class="abs" style="left:1660px;top:17px;width:16px;height:16px;" viewBox="0 0 16 16" fill="#555"><path fill-rule="evenodd" d="M9.40 8.20 L9.34 8.87 L10.56 9.42 L9.88 11.06 L8.64 10.58 L8.20 11.10 L7.68 11.54 L8.16 12.78 L6.52 13.46 L5.97 12.24 L5.30 12.30 L4.63 12.24 L4.08 13.46 L2.44 12.78 L2.92 11.54 L2.40 11.10 L1.96 10.58 L0.72 11.06 L0.04 9.42 L1.26 8.87 L1.20 8.20 L1.26 7.53 L0.04 6.98 L0.72 5.34 L1.96 5.82 L2.40 5.30 L2.92 4.86 L2.44 3.62 L4.08 2.94 L4.63 4.16 L5.30 4.10 L5.97 4.16 L6.52 2.94 L8.16 3.62 L7.68 4.86 L8.20 5.30 L8.64 5.82 L9.88 5.34 L10.56 6.98 L9.34 7.53zM3.60 8.20a1.70 1.70 0 1 0 3.40 0a1.70 1.70 0 1 0 -3.40 0zM15.10 4.00 L15.07 4.41 L15.81 4.75 L15.40 5.75 L14.63 5.45 L14.37 5.77 L14.05 6.03 L14.35 6.80 L13.35 7.21 L13.01 6.47 L12.60 6.50 L12.19 6.47 L11.85 7.21 L10.85 6.80 L11.15 6.03 L10.83 5.77 L10.57 5.45 L9.80 5.75 L9.39 4.75 L10.13 4.41 L10.10 4.00 L10.13 3.59 L9.39 3.25 L9.80 2.25 L10.57 2.55 L10.83 2.23 L11.15 1.97 L10.85 1.20 L11.85 0.79 L12.19 1.53 L12.60 1.50 L13.01 1.53 L13.35 0.79 L14.35 1.20 L14.05 1.97 L14.37 2.23 L14.63 2.55 L15.40 2.25 L15.81 3.25 L15.07 3.59zM11.60 4.00a1.00 1.00 0 1 0 2.00 0a1.00 1.00 0 1 0 -2.00 0zM15.10 12.10 L15.07 12.51 L15.81 12.85 L15.40 13.85 L14.63 13.55 L14.37 13.87 L14.05 14.13 L14.35 14.90 L13.35 15.31 L13.01 14.57 L12.60 14.60 L12.19 14.57 L11.85 15.31 L10.85 14.90 L11.15 14.13 L10.83 13.87 L10.57 13.55 L9.80 13.85 L9.39 12.85 L10.13 12.51 L10.10 12.10 L10.13 11.69 L9.39 11.35 L9.80 10.35 L10.57 10.65 L10.83 10.33 L11.15 10.07 L10.85 9.30 L11.85 8.89 L12.19 9.63 L12.60 9.60 L13.01 9.63 L13.35 8.89 L14.35 9.30 L14.05 10.07 L14.37 10.33 L14.63 10.65 L15.40 10.35 L15.81 11.35 L15.07 11.69zM11.60 12.10a1.00 1.00 0 1 0 2.00 0a1.00 1.00 0 1 0 -2.00 0z"/></svg>
</div>
<div class="abs" style="left:230px;top:102px;width:1690px;height:5px;background:linear-gradient(rgba(30,50,80,.06),rgba(30,50,80,0))"></div>
<div class="abs" style="left:1666px;top:911px;width:252px;height:31px;border-radius:8px;background:#fff;border:1px solid #e6e6e6;box-shadow:0 1px 3px rgba(0,0,0,.06)"></div>
<svg class="abs" style="left:1674px;top:918px;width:20px;height:18px" viewBox="0 0 20 18"><path d="M15 3C11 1 4 2 4 6s9 2 9 6-7 4-11 2" stroke="#ff7a00" stroke-width="3.2" fill="none" stroke-linecap="round"/></svg>
<div class="abs" style="left:1702px;top:918px;width:1px;height:17px;background:#ddd"></div>
<div class="abs t" style="left:1712px;top:919px;font-size:16px;color:#000">中</div>
<div class="abs t" style="left:1735px;top:917px;font-size:18px;color:#000;font-weight:bold">,</div>
<svg class="abs" style="left:1768px;top:916px;width:12px;height:22px" viewBox="0 0 12 22"><rect x="3" y="1" width="6" height="12" rx="3" stroke="#000" stroke-width="1.6" fill="none"/><path d="M1 9c0 3 2 6 5 6s5-3 5-6M6 15v6" stroke="#000" stroke-width="1.6" fill="none"/></svg>
<svg class="abs" style="left:1799px;top:918px;width:16px;height:16px" viewBox="0 0 16 16"><rect x="1" y="2" width="14" height="13" rx="1.5" stroke="#000" stroke-width="1.6" fill="none"/><rect x="5" y="0" width="6" height="3" fill="#000"/><path d="M4 9h2M7 9h2M10 9h2M5 12h6" stroke="#000" stroke-width="1.4"/></svg>
<svg class="abs" style="left:1831px;top:918px;width:17px;height:15px" viewBox="0 0 17 15"><defs><linearGradient id="ts" x1="0" y1="0" x2="1" y2="1"><stop offset="0" stop-color="#c86cf5"/><stop offset="1" stop-color="#4fb8f5"/></linearGradient></defs><path d="M5 1h7l5 3-2 3-2-1v9H4V6L2 7 0 4z" fill="url(#ts)"/><circle cx="14" cy="2" r="1.6" fill="#ff5a3c"/></svg>
<svg class="abs" style="left:1861px;top:918px;width:16px;height:16px" viewBox="0 0 16 16"><rect x="1" y="9" width="6" height="6" stroke="#000" stroke-width="1.5" fill="none"/><rect x="9" y="9" width="6" height="6" stroke="#000" stroke-width="1.5" fill="none"/><rect x="1" y="1" width="6" height="6" stroke="#000" stroke-width="1.5" fill="none"/><circle cx="12" cy="4" r="3" stroke="#000" stroke-width="1.5" fill="none"/></svg>
<div class="abs" style="left:1889px;top:916px;width:22px;height:22px;border-radius:50%;background:#fff;border:1px solid #f0d8d0"></div>
<div class="abs" style="left:1891px;top:921px;width:16px;height:8px;border-radius:4px;background:#f26b3a;transform:rotate(-15deg)"></div>
<div class="abs" style="left:1908px;top:914px;width:5px;height:5px;background:#ffd84a;transform:rotate(45deg)"></div>
<div class="abs t" style="left:1219px;top:883px;font-size:47px;letter-spacing:3px;color:#000;-webkit-text-stroke:.7px #000">九块九源码网</div>
<div class="abs t" style="left:1530px;top:882.3px;font-size:50px;color:#000;letter-spacing:.3px">www.9k9ym.com</div>
</body></html>
